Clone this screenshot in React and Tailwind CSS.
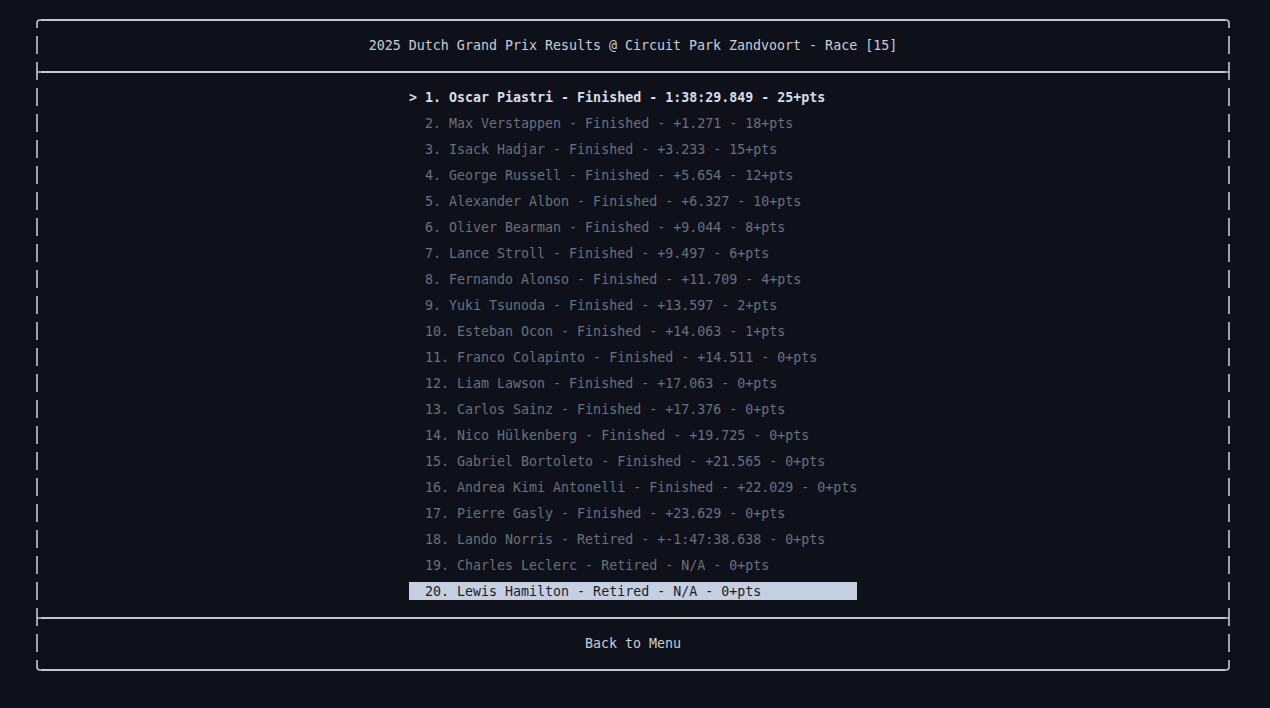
import React from "react";

const results = [
  "1. Oscar Piastri - Finished - 1:38:29.849 - 25+pts",
  "2. Max Verstappen - Finished - +1.271 - 18+pts",
  "3. Isack Hadjar - Finished - +3.233 - 15+pts",
  "4. George Russell - Finished - +5.654 - 12+pts",
  "5. Alexander Albon - Finished - +6.327 - 10+pts",
  "6. Oliver Bearman - Finished - +9.044 - 8+pts",
  "7. Lance Stroll - Finished - +9.497 - 6+pts",
  "8. Fernando Alonso - Finished - +11.709 - 4+pts",
  "9. Yuki Tsunoda - Finished - +13.597 - 2+pts",
  "10. Esteban Ocon - Finished - +14.063 - 1+pts",
  "11. Franco Colapinto - Finished - +14.511 - 0+pts",
  "12. Liam Lawson - Finished - +17.063 - 0+pts",
  "13. Carlos Sainz - Finished - +17.376 - 0+pts",
  "14. Nico Hülkenberg - Finished - +19.725 - 0+pts",
  "15. Gabriel Bortoleto - Finished - +21.565 - 0+pts",
  "16. Andrea Kimi Antonelli - Finished - +22.029 - 0+pts",
  "17. Pierre Gasly - Finished - +23.629 - 0+pts",
  "18. Lando Norris - Retired - +-1:47:38.638 - 0+pts",
  "19. Charles Leclerc - Retired - N/A - 0+pts",
  "20. Lewis Hamilton - Retired - N/A - 0+pts",
];

// box-drawing glyphs, one terminal cell (8x26)
const glyphs = {
  v: "M4 4 V22",
  tl: "M4 22 V17 Q4 14 7 14 H8",
  tr: "M0 14 H1 Q4 14 4 17 V22",
  bl: "M4 4 V11 Q4 14 7 14 H8",
  br: "M4 4 V11 Q4 14 1 14 H0",
  lt: "M4 4 V22 M4 14 H8",
  rt: "M4 4 V22 M0 14 H4",
};

function Glyph({ kind }) {
  return (
    <svg width="8" height="26" viewBox="0 0 8 26" className="shrink-0">
      <path d={glyphs[kind]} fill="none" stroke="#c3c7d1" strokeWidth="1.6" />
    </svg>
  );
}

function Rule({ left, right }) {
  return (
    <div className="flex h-[26px]">
      <Glyph kind={left} />
      <div className="flex-1 h-[2px] mt-[13px] bg-[#c3c7d1]" />
      <Glyph kind={right} />
    </div>
  );
}

function Line({ children }) {
  return (
    <div className="flex h-[26px]">
      <Glyph kind="v" />
      <div className="flex-1 flex justify-center pt-[4px] whitespace-pre">
        <div className="h-[18px] leading-[20px]">{children}</div>
      </div>
      <Glyph kind="v" />
    </div>
  );
}

export default function App() {
  const selected = 0;
  const cursor = 19;

  return (
    <div
      className="w-full h-[708px] bg-[#0f111a] pt-[6px] pl-[33px] text-[13.3px] text-[#c9cdd6]"
      style={{ fontFamily: '"DejaVu Sans Mono", "Liberation Mono", monospace' }}
    >
      <div className="w-[1200px]">
        <Rule left="tl" right="tr" />
        <Line>2025 Dutch Grand Prix Results @ Circuit Park Zandvoort - Race [15]</Line>
        <Rule left="lt" right="rt" />
        {results.map((r, i) => (
          <Line key={i}>
            <div
              className={
                "w-[448px] h-[18px] " +
                (i === cursor
                  ? "bg-[#c5cfe2] text-[#1b1e28]"
                  : i === selected
                  ? "font-bold text-[#d9dde8]"
                  : "text-[#6b6f7b]")
              }
            >
              {(i === selected ? "> " : "  ") + r}
            </div>
          </Line>
        ))}
        <Rule left="lt" right="rt" />
        <Line>Back to Menu</Line>
        <Rule left="bl" right="br" />
      </div>
    </div>
  );
}
